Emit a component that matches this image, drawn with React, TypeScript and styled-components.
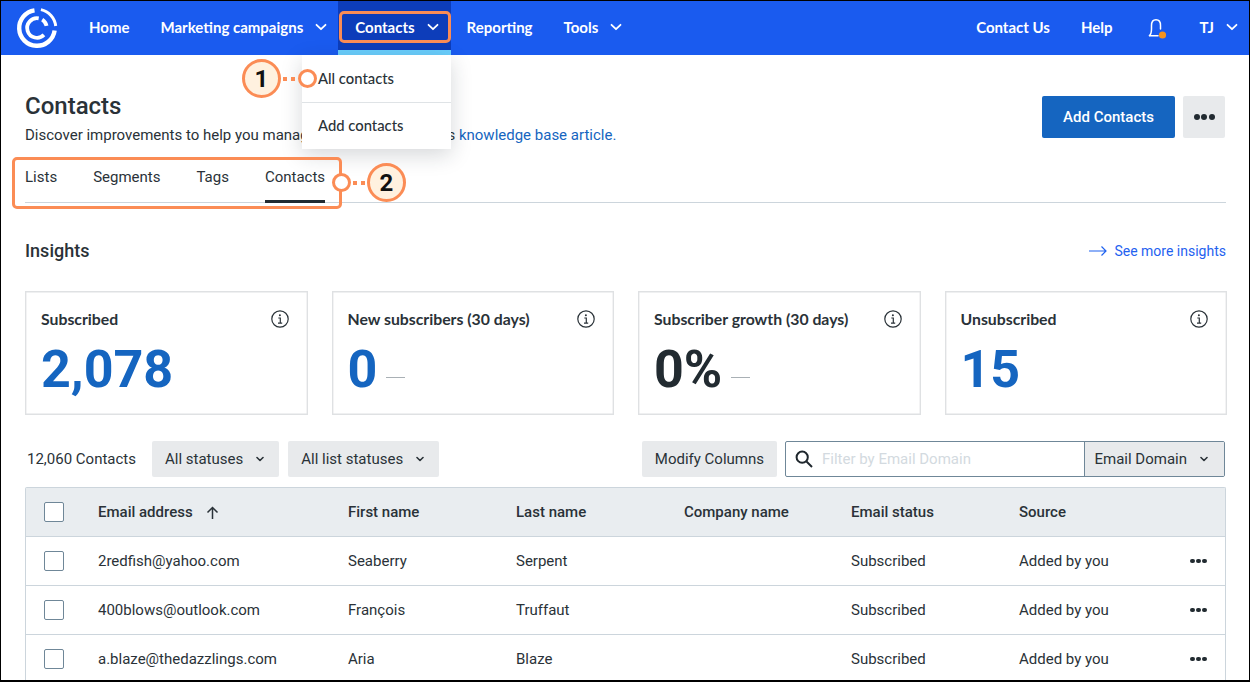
import React from 'react';
import styled, { createGlobalStyle } from 'styled-components';

const GlobalStyle = createGlobalStyle`
  html, body {
    margin: 0;
    padding: 0;
    background: #ffffff;
  }
  * {
    box-sizing: border-box;
  }
`;

const BRAND_FONT = `Lato, 'Open Sans', sans-serif`;
const BODY_FONT = `Roboto, 'Liberation Sans', sans-serif`;
const ORANGE = '#fb8c55';

const Chevron = ({ size = 12, color = '#fff', width = 1.8 }: { size?: number; color?: string; width?: number }) => (
  <svg width={size} height={size} viewBox="0 0 12 12" fill="none">
    <path d="M1.5 3.8 6 8.2l4.500-4.400" stroke={color} strokeWidth={width} strokeLinecap="round" strokeLinejoin="round" />
  </svg>
);

// angles are clockwise from 12 o'clock, around the logo centre
const arc = (r: number, from: number, to: number) => {
  const point = (deg: number) => {
    const rad = (deg * Math.PI) / 180;
    return `${(21 + r * Math.sin(rad)).toFixed(2)} ${(21 - r * Math.cos(rad)).toFixed(2)}`;
  };
  const large = to - from > 180 ? 1 : 0;
  return `M${point(from)}A${r} ${r} 0 ${large} 1 ${point(to)}`;
};

const Logo = () => (
  <svg width="42" height="42" viewBox="0 0 42 42" fill="none" stroke="#fff">
    <path d={arc(17.8, 98, 352)} strokeWidth="4.400" />
    <path d={arc(18.800, 12, 84)} strokeWidth="3" />
    <path d={arc(9.800, 135, 370)} strokeWidth="3.800" />
    <path d={arc(9.800, 32, 78)} strokeWidth="3.800" />
  </svg>
);

const Bell = () => (
  <svg width="24" height="26" viewBox="0 0 24 26" fill="none" stroke="#fff" strokeWidth="1.500">
    <path d="M3.500 20.500c1.500-1.300 2-3 2-6.500v-3.500c0-3.400 1.800-5.700 4.500-5.700s4.500 2.300 4.500 5.700v3.500" strokeLinecap="round" />
    <path d="M3.500 20.700h8.500" strokeLinecap="round" />
    <circle cx="16.500" cy="20" r="3.600" fill="#f7931e" stroke="none" />
  </svg>
);

const InfoIcon = () => (
  <svg width="18" height="18" viewBox="0 0 18 18" fill="none" stroke="#2a3238">
    <circle cx="9" cy="9" r="8.200" strokeWidth="1.200" />
    <path d="M7.300 8h2v5M7 13.200h4.200" strokeWidth="1.200" />
    <circle cx="8.900" cy="5.200" r="1" fill="#2a3238" stroke="none" />
  </svg>
);

const SearchIcon = () => (
  <svg width="18" height="18" viewBox="0 0 18 18" fill="none" stroke="#1f272d" strokeWidth="2">
    <circle cx="7.200" cy="7.200" r="5.600" />
    <path d="M11.500 11.500 17 17" />
  </svg>
);

const Frame = styled.div`
  position: relative;
  width: 1250px;
  height: 682px;
  overflow: hidden;
  background: #ffffff;
  color: #2a3238;
  font-family: ${BODY_FONT};
  border: 1px solid #000000;
  border-bottom-width: 2px;
`;

const TopBar = styled.header`
  display: flex;
  align-items: stretch;
  height: 54px;
  background: #1a5bef;
  padding-left: 15px;
`;

const LogoLink = styled.a`
  display: flex;
  align-items: center;
  width: 57px;
`;

const NavGroup = styled.nav`
  display: flex;
  align-items: stretch;
`;

const RightNav = styled(NavGroup)`
  margin-left: auto;
`;

const NavItem = styled.a<{ $active?: boolean; $menu?: boolean }>`
  display: flex;
  align-items: center;
  gap: 12px;
  padding: ${(p) => (p.$active ? '3px 12px 0 17px' : p.$menu ? '0 11px 2px 16px' : '0 15px 2px 16px')};
  color: #ffffff;
  font-family: ${BRAND_FONT};
  font-size: 15px;
  font-weight: 700;
  white-space: nowrap;
  background: ${(p) => (p.$active ? '#0d3dba' : 'transparent')};
  border-bottom: ${(p) => (p.$active ? '5px solid #69cdfb' : 'none')};
`;

const BellItem = styled(NavItem)`
  padding: 0 14px 0 18px;
`;

const Content = styled.main`
  padding: 28px 23px 0 24px;
`;

const TitleRow = styled.div`
  display: flex;
  justify-content: space-between;
  align-items: flex-start;
  height: 68px;
  padding-right: 1px;
`;

const Title = styled.h1`
  margin: 9px 0 5px;
  font-size: 24px;
  line-height: 28px;
  font-weight: 500;
`;

const Description = styled.p`
  margin: 0;
  font-size: 15px;
  line-height: 20px;
`;

const TextLink = styled.a`
  color: #1565c0;
`;

const HeaderActions = styled.div`
  display: flex;
  gap: 8px;
  margin-top: 13px;
`;

const PrimaryButton = styled.button`
  width: 133px;
  height: 42px;
  border: none;
  border-radius: 2px;
  background: #1565c0;
  color: #ffffff;
  font-family: ${BODY_FONT};
  font-size: 15px;
  font-weight: 500;
`;

const MoreButton = styled.button`
  display: flex;
  align-items: center;
  justify-content: center;
  width: 42px;
  height: 42px;
  border: none;
  border-radius: 2px;
  background: #e8eaec;
`;

const DotsRow = styled.span<{ $size: number }>`
  display: inline-flex;
  gap: 1.500px;
  span {
    width: ${(p) => p.$size}px;
    height: ${(p) => p.$size}px;
    border-radius: 50%;
    background: #222b31;
  }
`;

const Tabs = styled.div`
  display: flex;
  gap: 36px;
  height: 40px;
  border-bottom: 1px solid #ccd5dc;
  margin-top: 12px;
`;

const Tab = styled.a<{ $active?: boolean }>`
  height: 40px;
  padding-top: 4px;
  font-size: 15px;
  line-height: 20px;
  color: #2a3238;
  border-bottom: ${(p) => (p.$active ? '3px solid #222b31' : 'none')};
`;

const InsightsHeader = styled.div`
  display: flex;
  justify-content: space-between;
  align-items: center;
  margin-top: 36px;
  height: 24px;
`;

const SectionTitle = styled.h2`
  margin: -2px 0 0;
  font-size: 18px;
  font-weight: 500;
`;

const InsightsLink = styled.a`
  display: flex;
  align-items: center;
  gap: 7px;
  font-size: 14px;
  color: #1f62f0;
`;

const CardGrid = styled.section`
  display: grid;
  grid-template-columns: repeat(4, 1fr);
  gap: 24px;
  margin-top: 28px;
  margin-right: -1px;
`;

const Card = styled.article`
  position: relative;
  height: 124px;
  padding: 17px 15px;
  border: 1px solid #dfe1e3;
  box-shadow: inset 0 0 0 0.4px #e0e2e4;
`;

const CardTitle = styled.div`
  font-family: ${BRAND_FONT};
  font-size: 15.800px;
  line-height: 20px;
  font-weight: 700;
`;

const CardInfo = styled.span`
  position: absolute;
  top: 18px;
  right: 18px;
  display: flex;
`;

const CardValueRow = styled.div`
  display: flex;
  align-items: baseline;
  gap: 9px;
  margin-top: 10px;
`;

const CardValue = styled.div<{ $dark?: boolean }>`
  font-size: 52px;
  line-height: 62px;
  font-weight: 700;
  color: ${(p) => (p.$dark ? '#222b31' : '#1565c0')};
`;

const TrendDash = styled.span`
  width: 19px;
  height: 1px;
  background: #a9b0b5;
  transform: translateY(-9px);
`;

const Toolbar = styled.div`
  display: flex;
  align-items: center;
  gap: 8px;
  margin-top: 26px;
  height: 36px;
  padding-right: 1px;
`;

const ContactCount = styled.span`
  margin-left: 2px;
  margin-right: 8px;
  font-size: 15px;
`;

const GreyButton = styled.button`
  display: flex;
  align-items: center;
  gap: 13px;
  height: 36px;
  padding: 0 13px;
  border: none;
  border-radius: 2px;
  background: #e8eaec;
  color: #2a3238;
  font-family: ${BODY_FONT};
  font-size: 15px;
  white-space: nowrap;
`;

const StatusButton = styled(GreyButton)`
  padding-right: 15px;
  & + & {
    margin-left: 1px;
  }
`;

const ModifyButton = styled(GreyButton)`
  margin-left: auto;
`;

const FilterBox = styled.div`
  display: flex;
  width: 440px;
  height: 36px;
  border: 1px solid #6f8798;
  border-radius: 2px;
  overflow: hidden;
`;

const FilterInput = styled.div`
  display: flex;
  align-items: center;
  gap: 9px;
  flex: 1;
  padding-left: 9px;
  font-size: 15px;
  color: #d3dae0;
`;

const FilterSelect = styled.div`
  display: flex;
  align-items: center;
  gap: 13px;
  padding: 0 16px 0 10px;
  background: #e8eaec;
  border-left: 1px solid #6f8798;
  font-size: 15px;
  white-space: nowrap;
`;

const Table = styled.section`
  margin-top: 10px;
  border: 1px solid #ccd5dc;
  border-radius: 2px 2px 0 0;
  border-bottom: none;
`;

const Row = styled.div<{ $head?: boolean }>`
  display: grid;
  grid-template-columns: 72px 250px 168px 168px 167px 168px 1fr 35px;
  align-items: center;
  height: 49px;
  border-bottom: 1px solid #ccd5dc;
  font-size: 15px;
  font-weight: ${(p) => (p.$head ? 500 : 400)};
  background: ${(p) => (p.$head ? '#e9edf0' : '#ffffff')};
`;

const CheckCell = styled.span`
  display: flex;
  padding-left: 18px;
`;

const Checkbox = styled.span`
  width: 20px;
  height: 20px;
  border: 1px solid #6f8798;
  border-radius: 2px;
  background: #ffffff;
`;

const SortCell = styled.span`
  display: flex;
  align-items: center;
  gap: 13px;
`;

const Dropdown = styled.div`
  position: absolute;
  top: 54px;
  left: 301px;
  width: 149px;
  height: 94px;
  background: #ffffff;
  box-shadow: 0 6px 20px rgba(30, 40, 50, 0.18);
  font-family: ${BRAND_FONT};
  font-size: 14.800px;
  font-weight: 500;
`;

const DropdownItem = styled.div`
  display: flex;
  align-items: center;
  height: 47px;
  padding: 0 0 2px 16px;
  & + & {
    border-top: 1px solid #dfe3e6;
  }
`;

const Highlight = styled.div<{ $x: number; $y: number; $w: number; $h: number }>`
  position: absolute;
  left: ${(p) => p.$x}px;
  top: ${(p) => p.$y}px;
  width: ${(p) => p.$w}px;
  height: ${(p) => p.$h}px;
  border: 3px solid ${ORANGE};
  border-radius: 5px;
  pointer-events: none;
`;

const Callout = styled.div<{ $x: number; $y: number }>`
  position: absolute;
  left: ${(p) => p.$x}px;
  top: ${(p) => p.$y}px;
  display: flex;
  align-items: center;
`;

const CalloutBadge = styled.span`
  display: flex;
  align-items: center;
  justify-content: center;
  width: 39px;
  height: 39px;
  border: 3px solid ${ORANGE};
  border-radius: 50%;
  background: #fff1df;
  color: #111111;
  font-family: ${BODY_FONT};
  font-size: 24px;
  font-weight: 700;
`;

const CalloutLine = styled.span<{ $w: number }>`
  width: ${(p) => p.$w}px;
  height: 4px;
  background: repeating-linear-gradient(90deg, transparent 0 2px, ${ORANGE} 2px 6px, transparent 6px 8px);
`;

const CalloutDot = styled.span`
  width: 19px;
  height: 19px;
  border: 3px solid ${ORANGE};
  border-radius: 50%;
  background: #ffffff;
`;

const Dots = ({ size }: { size: number }) => (
  <DotsRow $size={size}>
    <span />
    <span />
    <span />
  </DotsRow>
);

const contacts = [
  { email: '2redfish@yahoo.com', first: 'Seaberry', last: 'Serpent' },
  { email: '400blows@outlook.com', first: 'François', last: 'Truffaut' },
  { email: 'a.blaze@thedazzlings.com', first: 'Aria', last: 'Blaze' },
];

const insights = [
  { title: 'Subscribed', value: '2,078' },
  { title: 'New subscribers (30 days)', value: '0', trend: true },
  { title: 'Subscriber growth (30 days)', value: '0%', trend: true, dark: true },
  { title: 'Unsubscribed', value: '15' },
];

const App = () => {
  return (
    <Frame>
      <GlobalStyle />
      <TopBar>
        <LogoLink>
          <Logo />
        </LogoLink>
        <NavGroup>
          <NavItem>Home</NavItem>
          <NavItem $menu>
            Marketing campaigns <Chevron />
          </NavItem>
          <NavItem $active>
            Contacts <Chevron />
          </NavItem>
          <NavItem>Reporting</NavItem>
          <NavItem $menu>
            Tools <Chevron />
          </NavItem>
        </NavGroup>
        <RightNav>
          <NavItem>Contact Us</NavItem>
          <NavItem>Help</NavItem>
          <BellItem>
            <Bell />
          </BellItem>
          <NavItem $menu>
            TJ <Chevron />
          </NavItem>
        </RightNav>
      </TopBar>

      <Content>
        <TitleRow>
          <div>
            <Title>Contacts</Title>
            <Description>
              Discover improvements to help you manage your contacts in this{' '}
              <TextLink>knowledge base article.</TextLink>
            </Description>
          </div>
          <HeaderActions>
            <PrimaryButton>Add Contacts</PrimaryButton>
            <MoreButton>
              <Dots size={6} />
            </MoreButton>
          </HeaderActions>
        </TitleRow>

        <Tabs>
          <Tab>Lists</Tab>
          <Tab>Segments</Tab>
          <Tab>Tags</Tab>
          <Tab $active>Contacts</Tab>
        </Tabs>

        <InsightsHeader>
          <SectionTitle>Insights</SectionTitle>
          <InsightsLink>
            <svg width="18" height="12" viewBox="0 0 18 12" fill="none" stroke="#1f62f0" strokeWidth="1.200">
              <path d="M0 6h17M12.500 1.500 17 6l-4.500 4.500" />
            </svg>
            See more insights
          </InsightsLink>
        </InsightsHeader>

        <CardGrid>
          {insights.map((card) => (
            <Card key={card.title}>
              <CardTitle>{card.title}</CardTitle>
              <CardInfo>
                <InfoIcon />
              </CardInfo>
              <CardValueRow>
                <CardValue $dark={card.dark}>{card.value}</CardValue>
                {card.trend && <TrendDash />}
              </CardValueRow>
            </Card>
          ))}
        </CardGrid>

        <Toolbar>
          <ContactCount>12,060 Contacts</ContactCount>
          <StatusButton>
            All statuses <Chevron size={8} color="#2a3238" width={2.4} />
          </StatusButton>
          <StatusButton>
            All list statuses <Chevron size={8} color="#2a3238" width={2.4} />
          </StatusButton>
          <ModifyButton>Modify Columns</ModifyButton>
          <FilterBox>
            <FilterInput>
              <SearchIcon />
              Filter by Email Domain
            </FilterInput>
            <FilterSelect>
              Email Domain <Chevron size={8} color="#2a3238" width={2.4} />
            </FilterSelect>
          </FilterBox>
        </Toolbar>

        <Table>
          <Row $head>
            <CheckCell>
              <Checkbox />
            </CheckCell>
            <SortCell>
              Email address
              <svg width="13" height="13" viewBox="0 0 13 13" fill="none" stroke="#2a3238" strokeWidth="1.500">
                <path d="M6.500 13V1.500M1.500 6.500l5-5 5 5" />
              </svg>
            </SortCell>
            <span>First name</span>
            <span>Last name</span>
            <span>Company name</span>
            <span>Email status</span>
            <span>Source</span>
            <span />
          </Row>
          {contacts.map((c) => (
            <Row key={c.email}>
              <CheckCell>
                <Checkbox />
              </CheckCell>
              <span>{c.email}</span>
              <span>{c.first}</span>
              <span>{c.last}</span>
              <span />
              <span>Subscribed</span>
              <span>Added by you</span>
              <Dots size={4.500} />
            </Row>
          ))}
        </Table>
      </Content>

      <Dropdown>
        <DropdownItem>All contacts</DropdownItem>
        <DropdownItem>Add contacts</DropdownItem>
      </Dropdown>

      <Highlight $x={338} $y={10} $w={112} $h={32} />
      <Highlight $x={11} $y={156} $w={330} $h={52} />
      <Callout $x={241} $y={58}>
        <CalloutBadge>1</CalloutBadge>
        <CalloutLine $w={17} />
        <CalloutDot />
      </Callout>
      <Callout $x={331} $y={162}>
        <CalloutDot />
        <CalloutLine $w={16} />
        <CalloutBadge>2</CalloutBadge>
      </Callout>
    </Frame>
  );
};

export default App;
